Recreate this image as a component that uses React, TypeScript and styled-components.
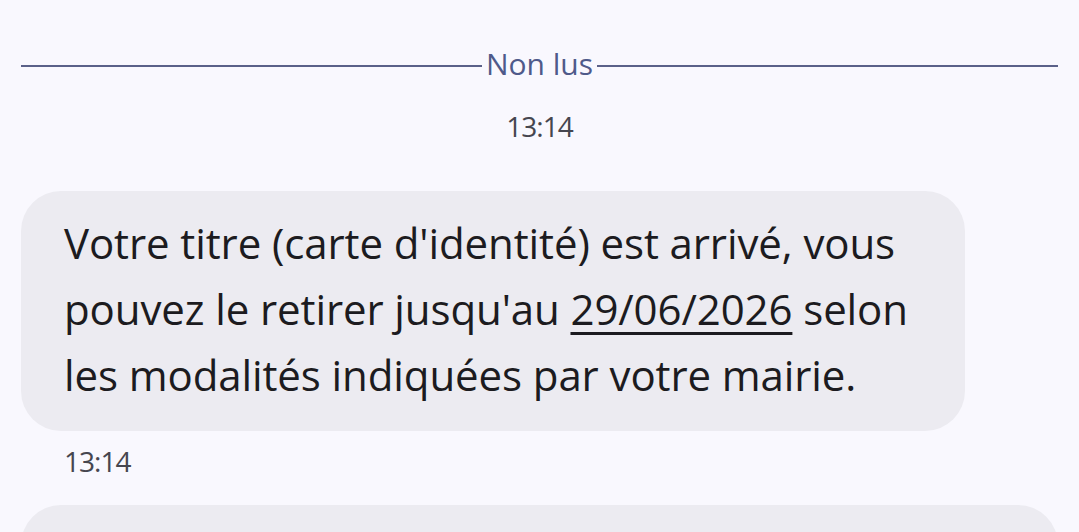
import styled, { createGlobalStyle } from 'styled-components';

const GlobalStyle = createGlobalStyle`
	html, body {
		margin: 0;
		padding: 0;
		background: #f9f8fe;
	}
	body {
		font-family: 'Open Sans', Roboto, sans-serif;
		overflow: hidden;
	}
`;

const Screen = styled.div`
	width: 1079px;
	height: 532px;
	padding: 0 21px;
	box-sizing: border-box;
	display: flex;
	flex-direction: column;
	overflow: hidden;
`;

const Divider = styled.div`
	display: flex;
	align-items: center;
	gap: 4px;
	margin-top: 44px;
	height: 40px;

	&::before,
	&::after {
		content: '';
		flex: 1;
		height: 2px;
		margin-top: 4px;
		background: #5b6189;
	}
`;

const DividerLabel = styled.span`
	color: #4f5a8a;
	font-size: 30px;
	line-height: 40px;
`;

const DayStamp = styled.div`
	margin-top: 27px;
	font-size: 28px;
	line-height: 30px;
	letter-spacing: -1px;
	color: #46464f;
	text-align: center;
`;

const Bubble = styled.div<{ $wide?: boolean }>`
	flex-shrink: 0;
	box-sizing: border-box;
	width: ${(p) => (p.$wide ? '100%' : '944px')};
	min-height: ${(p) => (p.$wide ? '120px' : 'auto')};
	margin-top: ${(p) => (p.$wide ? '29px' : '50px')};
	padding: 19px 43px 23px 43px;
	border-radius: 40px;
	background: #ecebf1;
	color: #1c1b20;
	font-size: 42px;
	letter-spacing: -0.1px;
	line-height: 66px;
`;

const DateLink = styled.span`
	text-decoration: underline;
	text-decoration-thickness: 3px;
	text-underline-offset: 7px;
`;

const MessageStamp = styled.div`
	margin-top: 15px;
	padding-left: 43px;
	font-size: 28px;
	line-height: 30px;
	letter-spacing: -1px;
	color: #46464f;
`;

const App = () => (
	<>
		<GlobalStyle />
		<Screen>
			<Divider>
				<DividerLabel>Non lus</DividerLabel>
			</Divider>
			<DayStamp>13:14</DayStamp>
			<Bubble>
				Votre titre (carte d'identité) est arrivé, vous pouvez le retirer jusqu'au{' '}
				<DateLink>29/06/2026</DateLink> selon les modalités indiquées par votre mairie.
			</Bubble>
			<MessageStamp>13:14</MessageStamp>
			<Bubble $wide />
		</Screen>
	</>
);

export default App;
